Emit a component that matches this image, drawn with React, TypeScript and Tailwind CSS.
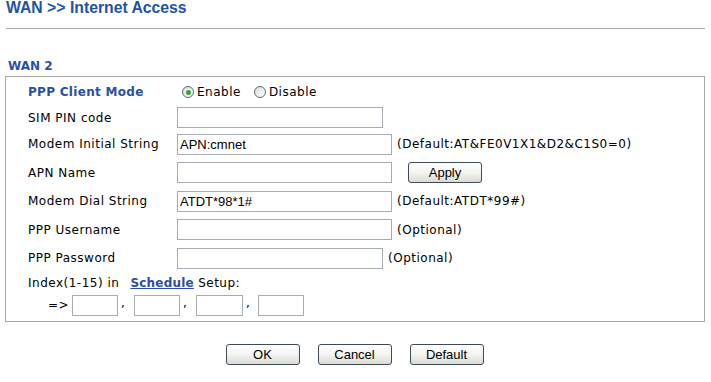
const verdana = "font-['DejaVu_Sans',Verdana,sans-serif]";
const arial = "font-['Liberation_Sans',Arial,sans-serif]";

function Field({ w = "w-[215px]", value = "" }: { w?: string; value?: string }) {
  return (
    <input
      type="text"
      defaultValue={value}
      className={`${w} h-[21px] border border-[#a5acb5] bg-white px-[2px] text-[13px] tracking-normal text-black outline-none ${arial}`}
    />
  );
}

function Btn({ children }: { children: React.ReactNode }) {
  return (
    <button
      className={`w-[74px] h-[21px] rounded-[3px] border border-[#3d4a5c] bg-gradient-to-b from-white via-[#f4f4f0] to-[#dcdcd4] text-[13px] tracking-normal text-black leading-none ${arial}`}
    >
      {children}
    </button>
  );
}

function Radio({ checked, label }: { checked?: boolean; label: string }) {
  return (
    <label className="flex items-center gap-[3px]">
      <span className="w-[12px] h-[12px] rounded-full border border-[#5a6a80] bg-gradient-to-br from-[#dcdcd6] to-white flex items-center justify-center">
        {checked && <span className="w-[5px] h-[5px] rounded-full bg-[#2fa82f]" />}
      </span>
      <span>{label}</span>
    </label>
  );
}

function Row({ h, label, bold, children }: { h: string; label: React.ReactNode; bold?: boolean; children?: React.ReactNode }) {
  return (
    <div className={`${h} flex items-center`}>
      <div className={`w-[149px] shrink-0 ${bold ? "font-bold text-[#2a4fa8] tracking-[0.3px]" : ""}`}>{label}</div>
      {children}
    </div>
  );
}

export default function App() {
  return (
    <div className={`w-[711px] h-[382px] bg-white text-[12px] tracking-[0.5px] text-black ${verdana}`}>
      <div className={`pl-[6px] h-[16px] leading-[15px] text-[15.75px] tracking-normal font-bold text-[#2154a7] ${arial}`}>
        WAN &gt;&gt; Internet Access
      </div>
      <div className="ml-[6px] mr-[6px] mt-[12px] h-[1px] bg-[#a9a9a4]" />
      <div className="pl-[8px] mt-[30px] h-[15px] leading-[15px] text-[12px] tracking-normal font-bold text-[#2a4fa8]">WAN 2</div>
      <div className="mx-[5px] mr-[6px] mt-[2px] border border-[#a9a9a2] pt-[2px] pb-[4px] pl-[22px]">
        <Row h="h-[26px]" label="PPP Client Mode" bold>
          <div className="flex items-center gap-[13px] pl-[5px]">
            <Radio checked label="Enable" />
            <Radio label="Disable" />
          </div>
        </Row>
        <Row h="h-[25px]" label="SIM PIN code">
          <Field w="w-[206px]" />
        </Row>
        <Row h="h-[28px]" label="Modem Initial String">
          <Field value="APN:cmnet" />
          <span className="ml-[5px]">(Default:AT&amp;FE0V1X1&amp;D2&amp;C1S0=0)</span>
        </Row>
        <Row h="h-[29px]" label="APN Name">
          <Field />
          <span className="ml-[16px]">
            <Btn>Apply</Btn>
          </span>
        </Row>
        <Row h="h-[28px]" label="Modem Dial String">
          <Field value="ATDT*98*1#" />
          <span className="ml-[5px]">(Default:ATDT*99#)</span>
        </Row>
        <Row h="h-[29px]" label="PPP Username">
          <Field />
          <span className="ml-[5px]">(Optional)</span>
        </Row>
        <Row h="h-[28px]" label="PPP Password">
          <Field w="w-[206px]" />
          <span className="ml-[5px]">(Optional)</span>
        </Row>
        <div className="h-[21px] flex items-center">
          Index(1-15) in
          <a href="#" className="ml-[11px] font-bold text-[#2a4fa8] underline tracking-[0.2px]">Schedule</a>&nbsp;Setup:
        </div>
        <div className="h-[24px] flex items-center pl-[20px]">
          <span className="mr-[3px]">=&gt;</span>
          <Field w="w-[46px]" />
          <span className="w-[16px] self-end pb-[5px] pl-[3px]">,</span>
          <Field w="w-[46px]" />
          <span className="w-[16px] self-end pb-[5px] pl-[3px]">,</span>
          <Field w="w-[47px]" />
          <span className="w-[15px] self-end pb-[5px] pl-[3px]">,</span>
          <Field w="w-[46px]" />
        </div>
      </div>
      <div className="mt-[22px] flex justify-center gap-[18px] pr-[2px]">
        <Btn>OK</Btn>
        <Btn>Cancel</Btn>
        <Btn>Default</Btn>
      </div>
    </div>
  );
}
